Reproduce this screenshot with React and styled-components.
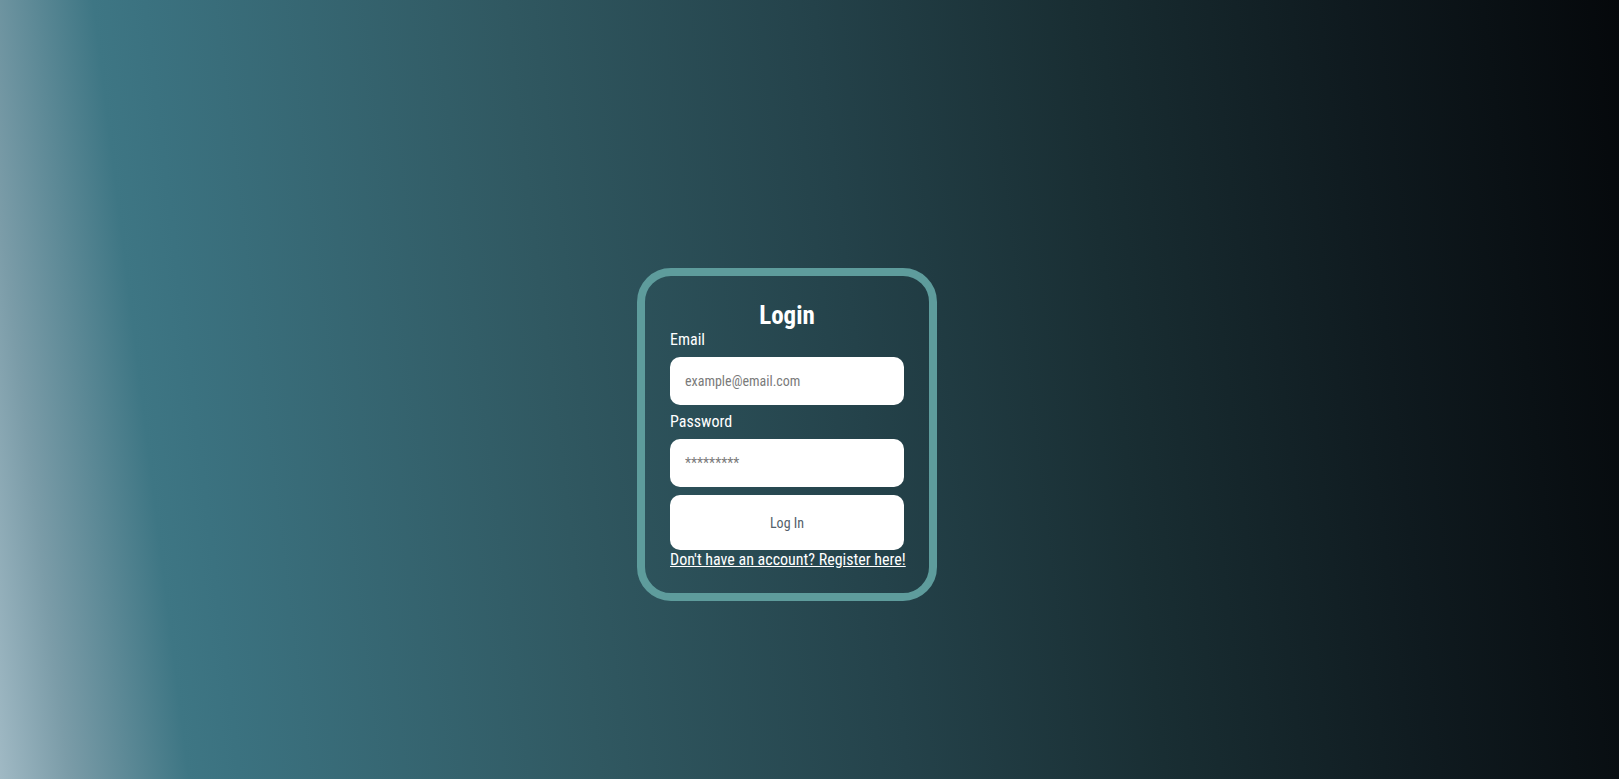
import styled, { createGlobalStyle } from 'styled-components';

const GlobalStyle = createGlobalStyle`
  html, body {
    margin: 0;
    padding: 0;
  }
  body {
    font-family: "Roboto Condensed", "Liberation Sans Narrow", Roboto, sans-serif;
  }
  * {
    box-sizing: border-box;
  }
`

const Page = styled.main`
  min-height: 100vh;
  display: flex;
  align-items: center;
  justify-content: center;
  padding: 90px 45px 0 0;
  background: linear-gradient(83deg,
    #a0b9c4 0%,
    #7b9ca8 4%,
    #3e7684 11%,
    #3b7280 14%,
    #305861 35%,
    #24424a 53%,
    #192e33 68%,
    #0f1a1f 84%,
    #05080b 100%);
`

const LoginCard = styled.form`
  width: 300px;
  padding: 25px 25px 24px;
  border: 8px solid #5e9c9c;
  border-radius: 34px;
  display: flex;
  flex-direction: column;
`

const Title = styled.h1`
  margin: 0;
  text-align: center;
  color: #ffffff;
  font-size: 25px;
  font-weight: 700;
  line-height: 29px;
`

const Label = styled.label`
  color: #ffffff;
  font-size: 16px;
  line-height: 19px;
  margin-bottom: 8px;
`

const Field = styled.input`
  height: 48px;
  border: none;
  border-radius: 10px;
  background: #ffffff;
  padding: 0 15px;
  font-family: inherit;
  font-size: 14px;
  color: #333;
  outline: none;
  margin-bottom: ${props => props.$last ? '8px' : '7px'};

  &::placeholder {
    color: #7a7a7a;
  }
`

const SubmitButton = styled.button`
  height: 55px;
  border: none;
  border-radius: 10px;
  background: #ffffff;
  font-family: inherit;
  font-size: 14px;
  color: #53606a;
  cursor: pointer;
`

const RegisterLink = styled.a`
  color: #ffffff;
  font-size: 16px;
  line-height: 19px;
  text-decoration: underline;
  white-space: nowrap;
`

export default function App() {
  return (
    <>
      <GlobalStyle />
      <Page>
        <LoginCard onSubmit={(e) => e.preventDefault()}>
          <Title>Login</Title>
          <Label htmlFor="email">Email</Label>
          <Field id="email" type="email" placeholder="example@email.com" />
          <Label htmlFor="password">Password</Label>
          <Field id="password" type="password" placeholder="*********" $last />
          <SubmitButton type="submit">Log In</SubmitButton>
          <RegisterLink href="#">Don't have an account? Register here!</RegisterLink>
        </LoginCard>
      </Page>
    </>
  )
}
